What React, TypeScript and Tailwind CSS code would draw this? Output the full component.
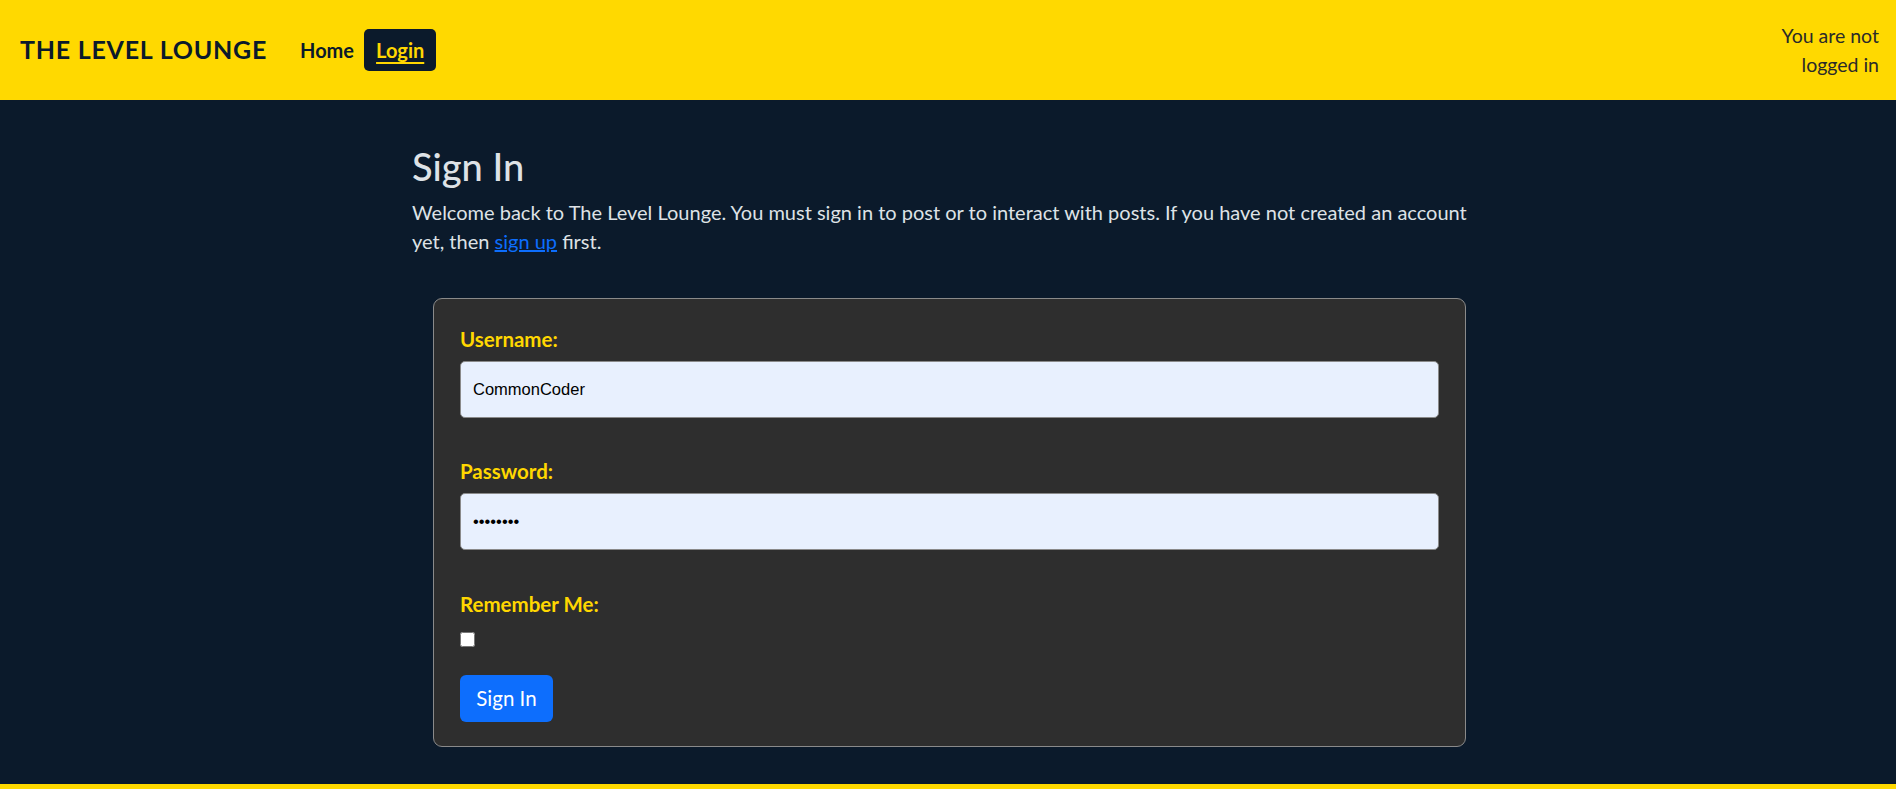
import { useState } from 'react';

const font = { fontFamily: 'Lato, "Noto Sans", sans-serif' };

const Field = ({ label, type, value }: { label: string; type: string; value: string }) => (
  <div className="flex flex-col">
    <label className="text-[20.5px] leading-[29px] font-bold text-[#ffd700]">{label}</label>
    <input
      type={type}
      defaultValue={value}
      className="mt-[7px] h-[57px] w-full rounded-[5px] border border-[#8a8a8a] bg-[#e8f0fe] px-[12px] text-[16.5px] text-black outline-none [font-family:'Liberation_Sans',Arial,sans-serif]"
    />
  </div>
);

export default function App() {
  const [remember, setRemember] = useState(false);

  return (
    <div className="flex min-h-screen flex-col bg-[#0b1a2b]" style={font}>
      {/* top bar */}
      <header className="flex h-[100px] items-center bg-[#ffd900] pl-[20px] pr-[17px]">
        <a href="#" className="text-[25px] font-bold tracking-[0.03em] text-[#0b1a2b]">
          THE LEVEL LOUNGE
        </a>
        <nav className="ml-[33px] flex items-center gap-[10px]">
          <a href="#" className="text-[20px] font-bold text-[#0b1a2b]">Home</a>
          <a
            href="#"
            className="flex h-[42px] items-center rounded-[5px] bg-[#0b1a2b] px-[12px] text-[20px] font-bold text-[#ffd700] underline underline-offset-[4px] decoration-[2px]"
          >
            Login
          </a>
        </nav>
        <div className="ml-auto w-[112px] text-right text-[19.5px] leading-[29px] text-[#2a2a2a]">
          You are not logged in
        </div>
      </header>

      <main className="flex-1">
        <div className="mx-auto w-[1072px] pt-[43px]">
          <h2 className="text-[38px] leading-[46px] font-medium text-[#dee2e6]">Sign In</h2>
          <p className="mt-[9px] text-[20px] leading-[29px] text-[#dee2e6]">
            Welcome back to The Level Lounge. You must sign in to post or to interact with posts. If you have not created an account yet, then{' '}
            <a href="#" className="text-[#0d6efd] underline">sign up</a> first.
          </p>

          <form
            className="mt-[42px] ml-[21px] mr-[18px] flex flex-col rounded-[9px] border border-[#8a8a8a] bg-[#2e2e2e] px-[26px] pt-[26px] pb-[24px]"
            onSubmit={(e) => e.preventDefault()}
          >
            <Field label="Username:" type="text" value="CommonCoder" />
            <div className="mt-[39px]">
              <Field label="Password:" type="password" value="password" />
            </div>
            <div className="mt-[40px] flex flex-col">
              <label className="text-[20.5px] leading-[29px] font-bold text-[#ffd700]">Remember Me:</label>
              <input
                type="checkbox"
                checked={remember}
                onChange={(e) => setRemember(e.target.checked)}
                className="mt-[13px] h-[15px] w-[15px]"
              />
            </div>
            <button
              type="submit"
              className="mt-[28px] h-[47px] w-[93px] rounded-[6px] bg-[#0d6efd] text-[20.5px] text-white"
            >
              Sign In
            </button>
          </form>
        </div>
      </main>

      <footer className="h-[5px] bg-[#ffd900]" />
    </div>
  );
}
